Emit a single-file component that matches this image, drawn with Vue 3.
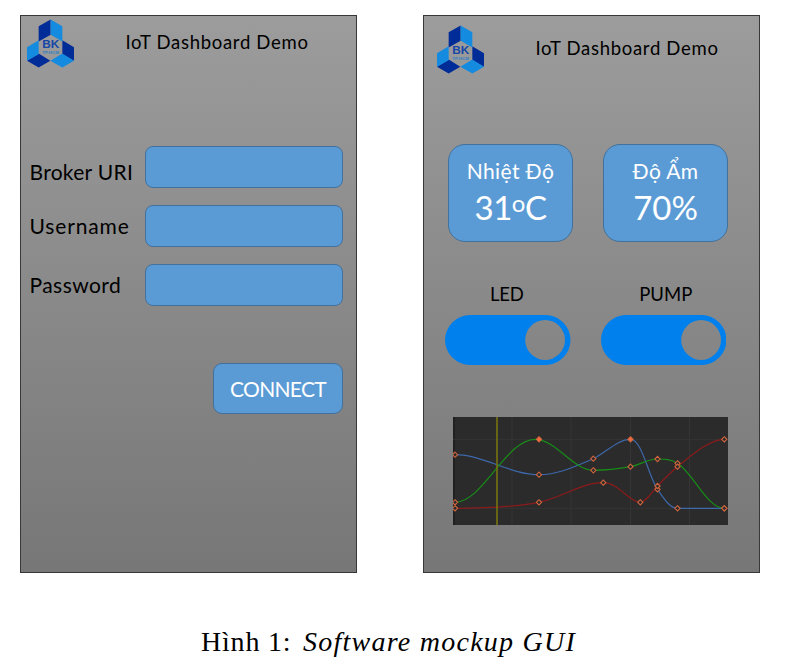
<script setup>
const fields = [
  { id: 'broker', label: 'Broker URI' },
  { id: 'user', label: 'Username' },
  { id: 'pass', label: 'Password' },
]
const readings = [
  { id: 'temp', label: 'Nhiệt Độ', value: '31', deg: 'o', unit: 'C' },
  { id: 'hum', label: 'Độ Ẩm', value: '70', deg: '', unit: '%' },
]
const switches = [
  { id: 'led', label: 'LED' },
  { id: 'pump', label: 'PUMP' },
]
const blue = [[2, 37.7], [86, 57.7], [140.3, 41.7], [204.5, 72.3], [224.5, 91.3], [271.3, 91.3]]
const green = [[2, 85.3], [140.3, 53.3], [177.5, 49.7], [204.5, 42], [224.5, 46.3], [271.3, 91.3]]
const red = [[2, 91.3], [86, 85.3], [150.3, 65.7], [187.3, 85.3], [204.5, 69], [224.5, 49.7], [271.3, 22.3]]
const points = [...blue, ...green, ...red]
const selected = [[86, 22.3], [177.5, 22.3]]
const diamond = ([x, y]) => `M${x} ${y - 2.6}l2.6 2.6l-2.6 2.6l-2.6 -2.6z`
</script>

<template>
  <main class="page">
    <div class="screens">
      <section v-for="screen in ['login', 'dashboard']" :key="screen" class="phone" :class="screen">
        <header class="head">
          <svg class="logo" viewBox="0 0 141 144">
            <path fill="#002c98" d="M71 0L35 20V66L71 46zM0 124L35 102L70 124L35 144zM106 62L141 83V124L106 104z" />
            <path fill="#158bdf" d="M71 0L106 20V66L71 46zM0 83L35 62V104L0 124zM70 124L106 102L141 124L106 144z" />
            <text class="bk" x="71" y="86" textLength="51" lengthAdjust="spacingAndGlyphs">BK</text>
            <text class="tp" x="71" y="102" textLength="50" lengthAdjust="spacingAndGlyphs">TP.HCM</text>
          </svg>
          <h1 class="title">IoT Dashboard Demo</h1>
        </header>

        <template v-if="screen === 'login'">
          <div class="form">
            <div v-for="f in fields" :key="f.id" class="row" :class="f.id">
              <span class="label">{{ f.label }}</span>
              <span class="field"></span>
            </div>
          </div>
          <button class="connect">CONNECT</button>
        </template>

        <template v-else>
          <div class="cards">
            <div v-for="r in readings" :key="r.id" class="card" :class="r.id">
              <span class="name">{{ r.label }}</span>
              <span class="value">{{ r.value }}<span v-if="r.deg" class="deg">{{ r.deg }}</span>{{ r.unit }}</span>
            </div>
          </div>
          <div class="switches">
            <div v-for="s in switches" :key="s.id" class="switch">
              <span class="caption">{{ s.label }}</span>
              <svg class="toggle" viewBox="0 0 126 50">
                <path fill="#0080ec" fill-rule="evenodd" d="M25 0H101A25 25 0 0 1 101 50H25A25 25 0 0 1 25 0zM100.5 5A20 20 0 1 0 100.5 45A20 20 0 1 0 100.5 5z" />
              </svg>
            </div>
          </div>
          <svg class="chart" viewBox="0 0 275 108">
            <rect width="275" height="108" fill="#2b2b2b" />
            <rect width="2" height="108" fill="#202020" />
            <path class="grid" d="M59 0V108M118 0V108M177.5 0V108M236.5 0V108M0 22.3H275M0 91.3H275" />
            <path class="line red" d="M2 91.3C30 91.3 61 90 86 85.3C108 81 128 65.7 150.3 65.7C166 65.7 176 85.3 187.3 85.3C193 85.3 198 76 204.5 69C211 62 217 56 224.5 49.7C240 37 257 22.3 271.3 22.3" />
            <path class="line blue" d="M2 37.7C31 37.7 57 57.7 86 57.7C105 57.7 122 49.5 140.3 41.7C153 36 164 22.3 177.5 22.3C189 22.3 195 58 204.5 72.3C211 82 217 91.3 224.5 91.3H271.3" />
            <path class="line green" d="M2 85.3C30 85.3 53 22.3 82 22.3C103 22.3 120 53.3 140.3 53.3C153 53.3 165 52 177.5 49.7C187 48 194 42 204.5 42C212 42 218 42 224.5 46.3C241 57 254 91.3 271.3 91.3" />
            <rect x="43.2" width="1.6" height="108" fill="#77740f" />
            <path v-for="(p, i) in points" :key="i" class="knot" :d="diamond(p)" />
            <path v-for="(p, i) in selected" :key="'s' + i" class="knot on" :d="diamond(p)" />
          </svg>
        </template>
      </section>
    </div>
    <p class="figure"><span class="num">Hình 1:</span><em>Software mockup GUI</em></p>
  </main>
</template>

<style>
body { margin: 0; background: #fff; }
</style>

<style scoped>
* { box-sizing: border-box; }
.page {
  width: 795px;
  height: 670px;
  padding: 15px 0 0 20px;
  background: #fff;
  font-family: Lato, "Open Sans", sans-serif;
  color: #000;
  overflow: hidden;
}
.screens { display: flex; gap: 66px; }
.phone {
  display: flex;
  flex-direction: column;
  width: 337px;
  height: 558px;
  border: 1px solid #383838;
  background: linear-gradient(#9c9c9c, #777);
}
.head { display: flex; height: 53px; padding: 3px 0 0 6px; }
.dashboard .head { height: 60px; padding: 9px 0 0 13px; }
.logo { width: 47px; height: 49px; flex: none; }
.bk { font: bold 33px "Liberation Sans", sans-serif; fill: #1546a8; text-anchor: middle; }
.tp { font: bold 12px "Liberation Sans", sans-serif; fill: #2f80c4; text-anchor: middle; }
.title {
  margin: 10px 0 0 51.5px;
  font-size: 18.5px;
  font-weight: 400;
  line-height: 26px;
  height: 26px;
  letter-spacing: 0.7px;
  white-space: nowrap;
}
.form { display: flex; flex-direction: column; gap: 16.5px; padding: 77px 0 0 8.5px; }
.row { display: flex; height: 42px; align-items: center; }
.row + .row { height: 42.5px; }
.label { width: 115.5px; font-size: 21px; line-height: 26px; white-space: nowrap; }
.broker .label { padding-top: 9px; letter-spacing: 0.3px; }
.user .label { letter-spacing: 0.85px; }
.pass .label { padding-top: 1px; letter-spacing: 0.45px; }
.field {
  width: 198px;
  height: 42px;
  border: 1.5px solid #41719c;
  border-radius: 8px;
  background: #5b9bd5;
}
.connect {
  align-self: flex-end;
  width: 130px;
  height: 51px;
  margin: 56.5px 13px 0 0;
  padding: 0;
  border: 1.5px solid #41719c;
  border-radius: 9px;
  background: #5b9bd5;
  color: #fff;
  font: 21px/50px Lato, sans-serif;
  letter-spacing: -0.7px;
}
.cards { display: flex; gap: 30px; padding: 68px 0 0 24px; }
.card {
  display: flex;
  flex-direction: column;
  align-items: center;
  width: 125px;
  height: 97.5px;
  padding-top: 12px;
  border: 1.5px solid #41719c;
  border-radius: 17px;
  background: #5b9bd5;
  color: #fff;
}
.name { font-size: 21px; line-height: 28px; letter-spacing: 0.4px; white-space: nowrap; }
.value { font-size: 33px; line-height: 44px; white-space: nowrap; }
.temp .value { letter-spacing: -0.5px; }
.deg { font-size: 24px; position: relative; top: -8px; line-height: 1; }
.switches { display: flex; gap: 30px; padding: 40.5px 0 0 21px; }
.switch { display: flex; flex-direction: column; align-items: center; width: 125.5px; }
.caption { font-size: 18.5px; line-height: 24px; margin-bottom: 9px; height: 24px; padding-right: 2px; letter-spacing: -0.3px; }
.switch:last-child .caption { padding: 0 0 0 5px; letter-spacing: 0; }
.toggle { width: 125.5px; height: 50px; }
.chart { width: 275px; height: 108px; margin: 52px 0 0 29px; }
.grid { stroke: #353535; stroke-width: 1; fill: none; }
.line { fill: none; stroke-width: 1.2; }
.line.red { stroke: #8c1b1b; }
.line.blue { stroke: #3d69aa; }
.line.green { stroke: #188c18; }
.knot { fill: #2b2b2b; stroke: #d0653e; stroke-width: 1.1; }
.knot.on { fill: #f36d3c; }
.figure {
  display: flex;
  margin: 53px 0 0 181px;
  font-family: "Liberation Serif", serif;
  font-size: 28px;
  line-height: 32px;
  white-space: nowrap;
}
.num { width: 102px; letter-spacing: 0.8px; }
.figure em { letter-spacing: 1.25px; }
</style>
